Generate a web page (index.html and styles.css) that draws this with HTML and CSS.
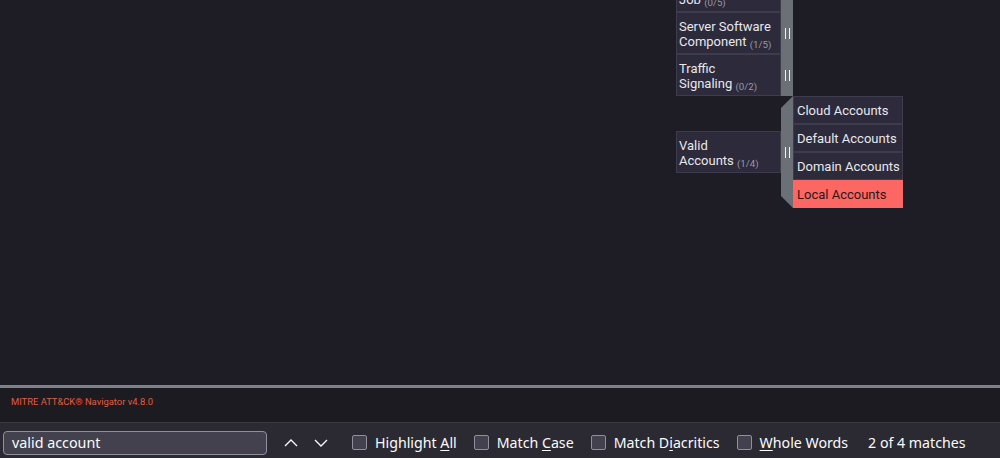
FILE: index.html
```html
<!DOCTYPE html>
<html lang="en">
<head>
<meta charset="utf-8">
<title>MITRE ATT&amp;CK Navigator</title>
<link rel="stylesheet" href="styles.css">
</head>
<body>
<div class="app">
  <main class="viewport">
    <div class="tactic">
      <div class="tech-row">
        <div class="cell">Scheduled Task/<wbr><span class="tail">Job <span class="count">(0/5)</span></span></div>
        <div class="bar"><span class="grip"></span></div>
      </div>
      <div class="tech-row">
        <div class="cell">Server Software <span class="tail">Component <span class="count">(1/5)</span></span></div>
        <div class="bar"><span class="grip"></span></div>
      </div>
      <div class="tech-row">
        <div class="cell">Traffic <span class="tail">Signaling <span class="count">(0/2)</span></span></div>
        <div class="bar"><span class="grip"></span></div>
      </div>
      <div class="tech-row expanded">
        <div class="cell">Valid <span class="tail">Accounts <span class="count">(1/4)</span></span></div>
        <div class="bar open"><span class="grip"></span></div>
        <div class="subs">
          <div class="sub">Cloud Accounts</div>
          <div class="sub">Default Accounts</div>
          <div class="sub">Domain Accounts</div>
          <div class="sub selected">Local Accounts</div>
        </div>
      </div>
    </div>
  </main>

  <footer class="footer">
    <span class="version">MITRE ATT&amp;CK® Navigator v4.8.0</span>
  </footer>

  <div class="findbar">
    <div class="find-input">valid account</div>
    <button class="nav-btn" aria-label="Previous">
      <svg width="14" height="8" viewBox="0 0 14 8"><path d="M1 7 L7 1 L13 7" fill="none" stroke="#fbfbfe" stroke-width="1.3"/></svg>
    </button>
    <button class="nav-btn" aria-label="Next">
      <svg width="14" height="8" viewBox="0 0 14 8"><path d="M1 1 L7 7 L13 1" fill="none" stroke="#fbfbfe" stroke-width="1.3"/></svg>
    </button>
    <label class="opt"><span class="box"></span><span class="text">Highlight <u>A</u>ll</span></label>
    <label class="opt"><span class="box"></span><span class="text">Match <u>C</u>ase</span></label>
    <label class="opt"><span class="box"></span><span class="text">Match D<u>i</u>acritics</span></label>
    <label class="opt"><span class="box"></span><span class="text"><u>W</u>hole Words</span></label>
    <span class="status">2 of 4 matches</span>
  </div>
</div>
</body>
</html>
```

FILE: styles.css
```css
* { box-sizing: border-box; }

html, body {
  margin: 0;
  padding: 0;
  background: #1e1d25;
}

.app {
  width: 1000px;
  height: 458px;
  display: flex;
  flex-direction: column;
  overflow: hidden;
}

/* matrix area, scrolled so the first technique is partly hidden */
.viewport {
  height: 385px;
  flex: none;
  overflow: hidden;
  background: #1e1d25;
}

.tactic {
  margin-top: -30px;
  margin-left: 676px;
  display: flex;
  flex-direction: column;
  font-family: Roboto, "Liberation Sans", sans-serif;
}

.tech-row {
  display: flex;
  align-items: stretch;
}

.tech-row.expanded {
  align-items: center;
}

.cell {
  width: 105px;
  height: 42px;
  padding: 7px 2px 0 2px;
  border: 1px solid #3d3c4c;
  background: #2c2a3b;
  color: #e8e8ec;
  font-size: 13px;
  line-height: 14.5px;
}

.tail {
  white-space: nowrap;
}

.count {
  font-size: 9.7px;
  color: #9b9aa6;
  position: relative;
  top: 2px;
}

.bar {
  width: 12px;
  background: #6b7077;
  display: flex;
  align-items: center;
  justify-content: center;
}

.bar.open {
  height: 112px;
  align-self: stretch;
  clip-path: polygon(100% 0, 100% 100%, 0 calc(100% - 12px), 0 12px);
}

.grip {
  width: 5px;
  height: 11px;
  border-left: 1.6px solid #f0f0f2;
  border-right: 1.6px solid #f0f0f2;
  margin-left: 1px;
}

.subs {
  display: flex;
  flex-direction: column;
}

.sub {
  width: 110px;
  height: 28px;
  padding-left: 3px;
  border: 1px solid #3d3c4c;
  background: #2c2a3b;
  color: #e8e8ec;
  font-size: 13px;
  line-height: 27px;
  white-space: nowrap;
}

.sub.selected {
  background: #fc6764;
  border-color: #fc6764;
  color: #2a1716;
}

/* footer */
.footer {
  height: 37px;
  flex: none;
  border-top: 3px solid #7e8187;
  background: #1c1b22;
  padding: 3px 0 0 11px;
}

.version {
  font-family: Roboto, "Liberation Sans", sans-serif;
  font-size: 9.4px;
  color: #e25d3f;
}

/* find bar */
.findbar {
  flex: 1;
  border-top: 1px solid #3a3942;
  background: #2b2a33;
  display: flex;
  align-items: center;
  padding: 4px 0 0 3px;
  font-family: "Noto Sans", "Open Sans", sans-serif;
  font-size: 14.2px;
  color: #fbfbfe;
}

.find-input {
  width: 264px;
  height: 24px;
  border: 1px solid #8f8f9d;
  border-radius: 4px;
  background: #42414d;
  padding-left: 8px;
  line-height: 22px;
  font-size: 14.3px;
}

.nav-btn {
  width: 30px;
  height: 28px;
  border: 0;
  background: transparent;
  padding: 0;
  display: flex;
  align-items: center;
  justify-content: center;
}

.nav-btn:first-of-type {
  margin-left: 9px;
}

.opt {
  display: flex;
  align-items: center;
  margin-left: 17px;
}

.nav-btn + .opt {
  margin-left: 16px;
}

.box {
  width: 15px;
  height: 15px;
  border: 1px solid #8f8f9d;
  border-radius: 2px;
  background: #42414d;
  margin-right: 8px;
}

.text {
  white-space: pre;
}

.opt u {
  text-underline-offset: 2px;
}

.status {
  margin-left: 20px;
}
```
